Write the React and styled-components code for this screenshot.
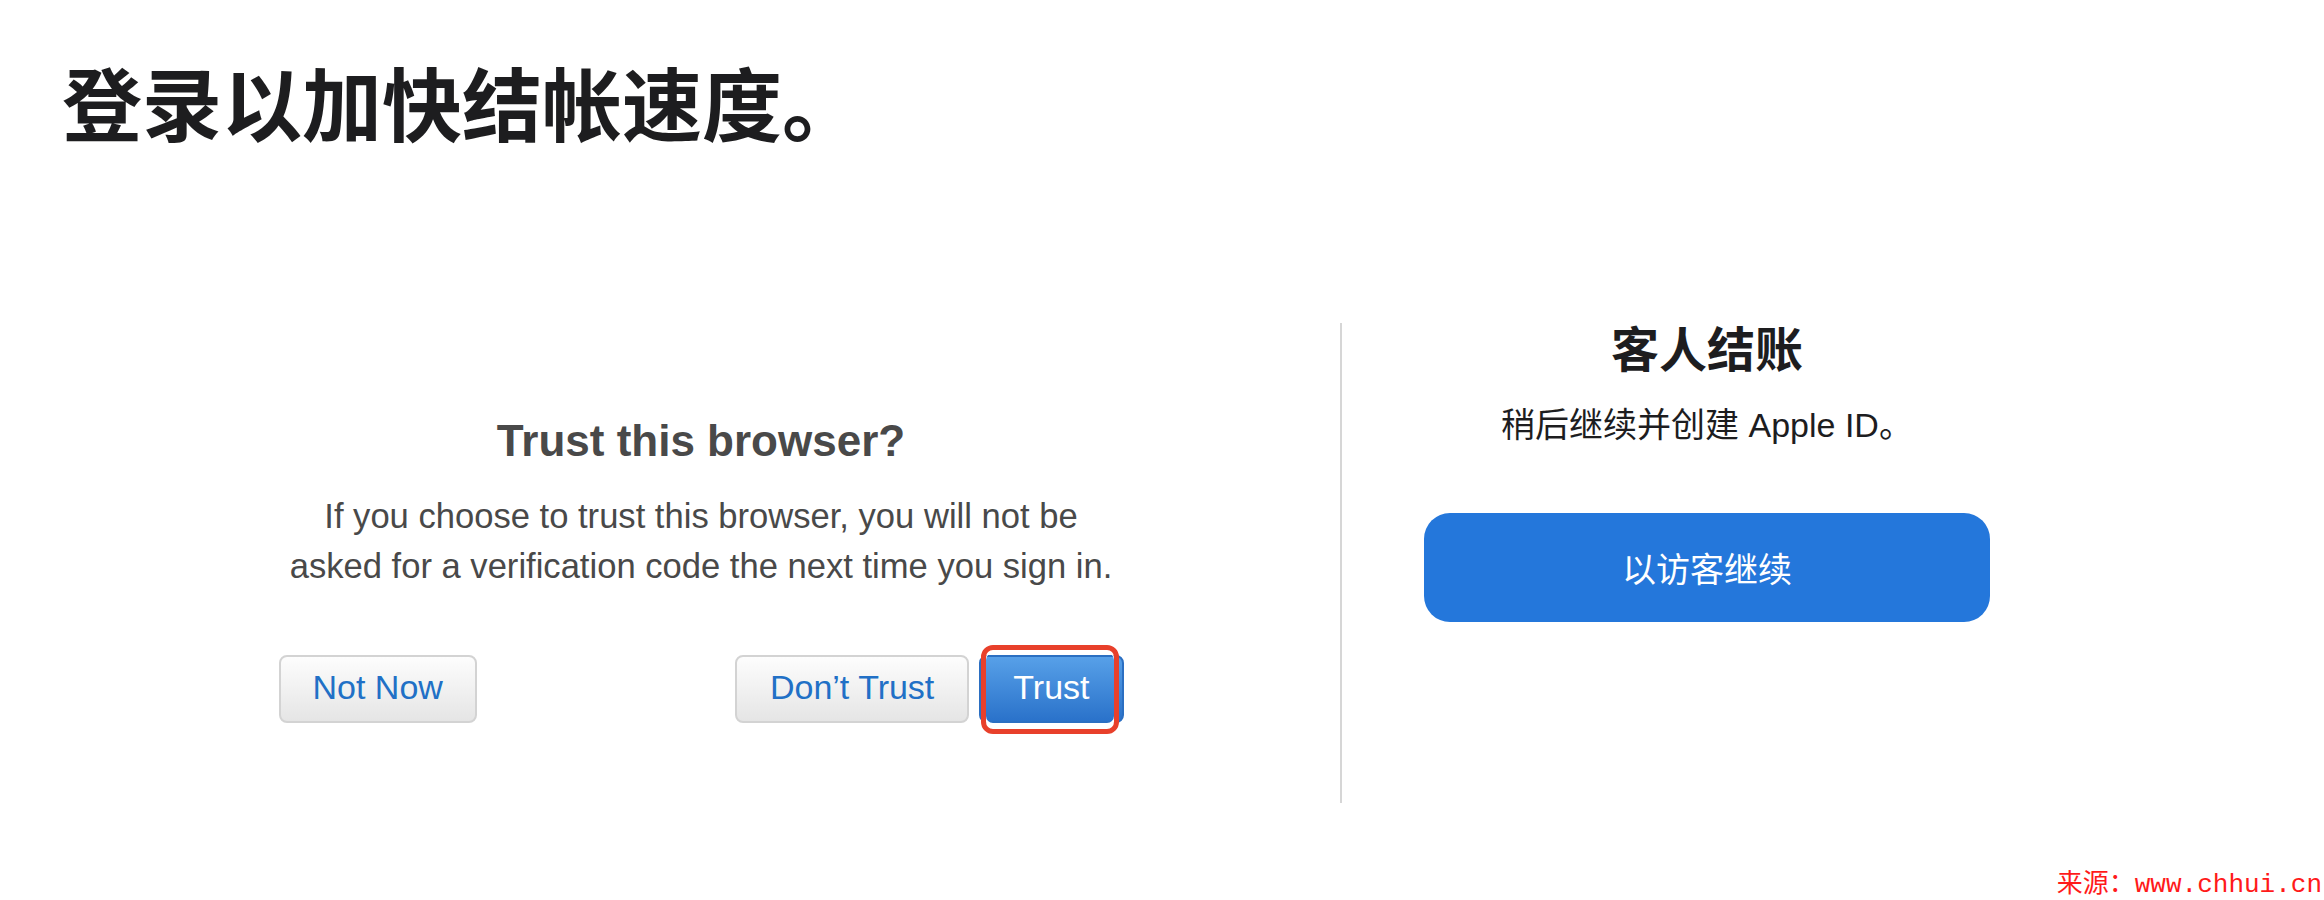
import React from "react";
import styled, { createGlobalStyle } from "styled-components";

const GlobalStyle = createGlobalStyle`
  html, body {
    margin: 0;
    padding: 0;
    background: #ffffff;
  }
  body {
    font-family: "Liberation Sans", "Noto Sans CJK SC", sans-serif;
    color: #1d1d1f;
  }
`;

const StyledPage = styled.div`
  position: relative;
  width: 2324px;
  height: 900px;
  box-sizing: border-box;
  padding: 0 62px;
  overflow: hidden;
`;

const StyledTitle = styled.h1`
  margin: 0;
  padding-top: 52px;
  font-family: "Noto Sans CJK SC", sans-serif;
  font-size: 80px;
  line-height: 96px;
  font-weight: 700;
  color: #1d1d1f;
`;

const StyledColumns = styled.div`
  display: flex;
  margin-top: 175px;
  height: 480px;
`;

const StyledLeftColumn = styled.div`
  display: flex;
  flex-direction: column;
  align-items: center;
  width: 1278px;
  padding-top: 92px;
  box-sizing: border-box;
`;

const StyledDivider = styled.div`
  width: 2px;
  background-color: #d6d6d6;
`;

const StyledRightColumn = styled.div`
  display: flex;
  flex-direction: column;
  align-items: center;
  width: 730px;
`;

const StyledHeading = styled.h2`
  margin: 0;
  font-size: ${(props) => props.fontsize};
  line-height: ${(props) => props.lineheight};
  font-weight: 700;
  color: ${(props) => props.fontcolor || "#1d1d1f"};
`;

const StyledText = styled.p`
  margin: ${(props) => props.margin || "0"};
  max-width: ${(props) => props.maxwidth || "none"};
  font-size: ${(props) => props.fontsize || "34px"};
  line-height: ${(props) => props.lineheight || "50px"};
  text-align: center;
  color: ${(props) => props.fontcolor || "#1d1d1f"};
`;

const StyledButtonRow = styled.div`
  display: flex;
  justify-content: space-between;
  width: 845px;
  margin-top: 64px;
`;

const StyledButtonGroup = styled.div`
  display: flex;
  gap: 10px;
`;

const StyledButton = styled.button`
  height: 68px;
  padding: 0 ${(props) => props.padx || "32px"} 4px;
  border-radius: 8px;
  font-family: "Liberation Sans", sans-serif;
  font-size: 34px;
  line-height: 60px;
  cursor: pointer;
  border: 2px solid ${(props) => (props.primary ? "#2b6fc2" : "#d3d3d3")};
  color: ${(props) => (props.primary ? "#ffffff" : "#2170c6")};
  background: ${(props) =>
    props.primary
      ? "linear-gradient(#57a0e8, #2a72ca)"
      : "linear-gradient(#fdfdfd, #e5e5e5)"};
`;

const StyledHighlightWrap = styled.div`
  position: relative;
  display: flex;
`;

const StyledHighlight = styled.span`
  position: absolute;
  left: 2px;
  right: 5px;
  top: -10px;
  bottom: -11px;
  border: 5px solid #e8402b;
  border-radius: 12px;
  box-shadow: inset 0 3px 0 #ffffff, inset 0 -6px 0 #ffffff;
  pointer-events: none;
`;

const StyledGuestButton = styled.button`
  width: 566px;
  height: 109px;
  margin-top: 66px;
  border: none;
  border-radius: 26px;
  background-color: #2477db;
  color: #ffffff;
  font-family: "Noto Sans CJK SC", sans-serif;
  font-size: 34px;
  cursor: pointer;
`;

const StyledWatermark = styled.span`
  position: absolute;
  right: 2px;
  bottom: -2px;
  font-family: "Liberation Mono", "Noto Sans CJK SC", monospace;
  font-size: 26px;
  line-height: 34px;
  color: #ff1a1a;
`;

function App() {
  return (
    <StyledPage>
      <GlobalStyle />
      <StyledTitle>登录以加快结帐速度。</StyledTitle>
      <StyledColumns>
        <StyledLeftColumn>
          <StyledHeading fontsize="44px" lineheight="52px" fontcolor="#494949">
            Trust this browser?
          </StyledHeading>
          <StyledText
            margin="24px 0 0"
            maxwidth="835px"
            fontsize="34.6px"
            fontcolor="#494949"
          >
            If you choose to trust this browser, you will not be asked for a
            verification code the next time you sign in.
          </StyledText>
          <StyledButtonRow>
            <StyledButton padx="32px">Not Now</StyledButton>
            <StyledButtonGroup>
              <StyledButton padx="33px">Don’t Trust</StyledButton>
              <StyledHighlightWrap>
                <StyledButton primary padx="32px">
                  Trust
                </StyledButton>
                <StyledHighlight />
              </StyledHighlightWrap>
            </StyledButtonGroup>
          </StyledButtonRow>
        </StyledLeftColumn>
        <StyledDivider />
        <StyledRightColumn>
          <StyledHeading fontsize="48px" lineheight="56px">
            客人结账
          </StyledHeading>
          <StyledText margin="24px 0 0" lineheight="44px">
            稍后继续并创建 Apple ID。
          </StyledText>
          <StyledGuestButton>以访客继续</StyledGuestButton>
        </StyledRightColumn>
      </StyledColumns>
      <StyledWatermark>来源：www.chhui.cn</StyledWatermark>
    </StyledPage>
  );
}

export default App;
